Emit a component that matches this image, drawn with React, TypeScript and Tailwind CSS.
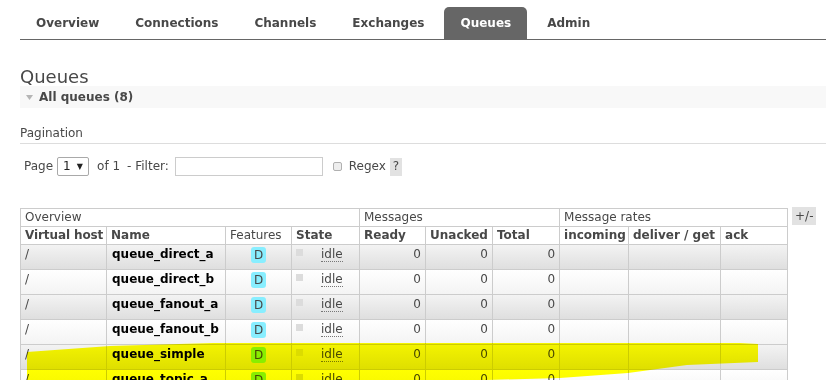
const tabs = ['Overview', 'Connections', 'Channels', 'Exchanges', 'Queues', 'Admin'];

const queues = [
  'queue_direct_a',
  'queue_direct_b',
  'queue_fanout_a',
  'queue_fanout_b',
  'queue_simple',
  'queue_topic_a',
  'queue_topic_b',
  'queue_work',
];

function Tabs() {
  return (
    <nav className="mt-[7px] flex gap-1 border-b border-[#666]">
      {tabs.map((t) => (
        <div
          key={t}
          className={
            t === 'Queues'
              ? 'flex h-8 items-center rounded-t-[5px] bg-[#666] px-4 font-bold text-white'
              : 'flex h-8 items-center px-4 font-bold text-[#484848]'
          }
        >
          {t}
        </div>
      ))}
    </nav>
  );
}

function Pagination() {
  return (
    <>
      <div className="mt-[18px] border-b border-[#ddd] pb-[2px]">Pagination</div>
      <div className="mt-[13px] flex h-[19px] items-center pl-1">
        <span>Page</span>
        <div className="ml-[4px] flex h-[19px] w-[32px] items-center gap-[6px] rounded-[2px] border border-[#a9a9a9] pl-[5px] text-[#222]">
          <span>1</span>
          <span className="text-[8px]">▼</span>
        </div>
        <span className="ml-[8px]">of 1</span>
        <span className="ml-[7px]">- Filter:</span>
        <div className="ml-[6px] h-[19px] w-[148px] border border-[#ccc] bg-white" />
        <div className="ml-[10px] h-[9px] w-[9px] rounded-[2px] border border-[#b0b0b0] bg-[#eee]" />
        <span className="ml-[7px]">Regex</span>
        <span className="ml-[4px] flex h-[18px] items-center bg-[#e2e2e2] px-[3px]">?</span>
      </div>
    </>
  );
}

function QueueTable() {
  const th = 'whitespace-nowrap border border-[#ccc] px-1 text-left align-middle';
  const td = 'whitespace-nowrap border border-[#ccc] px-1 pt-[2px] align-top';
  return (
    <div className="mt-[32px] flex items-start">
      <table className="w-[768px] table-fixed border-collapse bg-white">
        <colgroup>
          <col className="w-[86px]" />
          <col className="w-[119px]" />
          <col className="w-[66px]" />
          <col className="w-[68px]" />
          <col className="w-[66px]" />
          <col className="w-[67px]" />
          <col className="w-[67px]" />
          <col className="w-[69px]" />
          <col className="w-[92px]" />
          <col className="w-[67px]" />
        </colgroup>
        <thead>
          <tr className="h-[18px]">
            <th colSpan={4} className={`${th} font-normal`}>Overview</th>
            <th colSpan={3} className={`${th} font-normal`}>Messages</th>
            <th colSpan={3} className={`${th} font-normal`}>Message rates</th>
          </tr>
          <tr className="h-[18px]">
            <th className={`${th} pr-0 font-bold tracking-[-0.1px]`}>Virtual host</th>
            <th className={`${th} font-bold`}>Name</th>
            <th className={`${th} font-normal`}>Features</th>
            <th className={`${th} font-bold`}>State</th>
            <th className={`${th} font-bold`}>Ready</th>
            <th className={`${th} font-bold`}>Unacked</th>
            <th className={`${th} font-bold`}>Total</th>
            <th className={`${th} font-bold`}>incoming</th>
            <th className={`${th} font-bold`}>deliver / get</th>
            <th className={`${th} font-bold`}>ack</th>
          </tr>
        </thead>
        <tbody>
          {queues.map((q, i) => (
            <tr
              key={q}
              className={
                i % 2 === 0
                  ? 'h-[25px] bg-gradient-to-b from-[#f3f3f3] to-[#dedede]'
                  : 'h-[25px] bg-gradient-to-b from-white to-[#f3f3f3]'
              }
            >
              <td className={td}>/</td>
              <td className={`${td} pl-[5px] font-bold text-black`}>{q}</td>
              <td className={`${td} text-center`}>
                <span className="inline-block rounded-[3px] bg-[#88eeff] px-[3px] leading-[16px] text-[#484848]">D</span>
              </td>
              <td className={td}>
                <div className="flex items-start">
                  <span className="mt-[2px] h-[7px] w-[7px] bg-[#dcdcdc]" />
                  <span className="ml-[18px] border-b border-dotted border-[#777] leading-[14px]">idle</span>
                </div>
              </td>
              <td className={`${td} text-right`}>0</td>
              <td className={`${td} text-right`}>0</td>
              <td className={`${td} text-right`}>0</td>
              <td className={td} />
              <td className={td} />
              <td className={td} />
            </tr>
          ))}
        </tbody>
      </table>
      <span className="ml-[4px] mt-[-1px] flex h-[18px] items-center bg-[#e2e2e2] px-[3px]">+/-</span>
    </div>
  );
}

export default function App() {
  return (
    <div className="relative h-[380px] w-[826px] overflow-hidden bg-white font-['DejaVu_Sans',Verdana,sans-serif] text-[12px] leading-[15px] text-[#484848]">
      <div className="pl-5">
        <Tabs />
        <h1 className="mt-[27px] text-[18px] font-normal leading-[19px]">Queues</h1>
        <div className="flex h-[22px] items-center bg-[#f8f8f8]">
          <svg className="ml-[6px] h-[5px] w-[7px]" viewBox="0 0 7 5">
            <path d="M0 0 L7 0 L3.5 5 Z" fill="#b5b5b5" />
          </svg>
          <span className="ml-[6px] font-bold">All queues (8)</span>
        </div>
        <Pagination />
        <QueueTable />
      </div>
      {/* marker highlight over queue_simple */}
      <svg
        className="pointer-events-none absolute left-0 top-0 mix-blend-multiply"
        width="826"
        height="380"
        viewBox="0 0 826 380"
      >
        <path
          d="M27 352 L110 346 L213 343 L560 343 L740 343 L758 344 L758 362 L687 365 L628 373 L560 378 L450 381 L27 381 Z"
          fill="#ffff00"
        />
      </svg>
    </div>
  );
}
